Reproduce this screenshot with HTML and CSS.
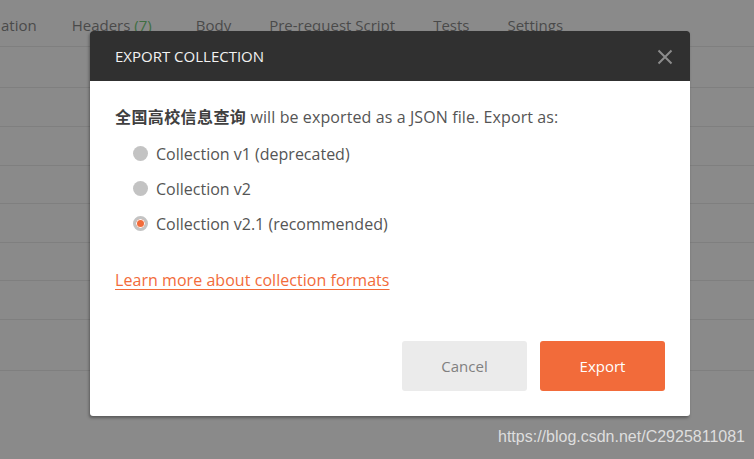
FILE: index.html
```html
<!DOCTYPE html>
<html lang="en">
<head>
<meta charset="utf-8">
<title>Export Collection</title>
<link rel="stylesheet" href="styles.css">
</head>
<body>
<div class="app">
  <nav class="tabs">
    <div class="tab tab-cut">ation</div>
    <div class="tab tab-headers">Headers <span class="count">(7)</span></div>
    <div class="tab">Body</div>
    <div class="tab">Pre-request Script</div>
    <div class="tab">Tests</div>
    <div class="tab">Settings</div>
  </nav>
  <div class="rows">
    <div class="row row-first"></div>
    <div class="row"></div>
    <div class="row"></div>
    <div class="row row-short"></div>
    <div class="row"></div>
    <div class="row row-short"></div>
    <div class="row"></div>
    <div class="row row-last"></div>
  </div>
</div>

<div class="modal">
  <header class="modal-header">
    <h1 class="modal-title">EXPORT COLLECTION</h1>
    <svg class="close" width="16" height="16" viewBox="0 0 16 16" aria-hidden="true">
      <path d="M1.5 1.5 L14.5 14.5 M14.5 1.5 L1.5 14.5" stroke="#8c8c8c" stroke-width="2" fill="none"/>
    </svg>
  </header>
  <div class="modal-body">
    <p class="desc"><strong class="name">全国高校信息查询</strong> will be exported as a JSON file. Export as:</p>
    <ul class="options">
      <li class="option"><span class="radio"></span>Collection v1 (deprecated)</li>
      <li class="option"><span class="radio"></span>Collection v2</li>
      <li class="option"><span class="radio radio-on"></span>Collection v2.1 (recommended)</li>
    </ul>
    <a class="learn" href="#">Learn more about collection formats</a>
    <div class="actions">
      <button class="btn btn-cancel">Cancel</button>
      <button class="btn btn-export">Export</button>
    </div>
  </div>
</div>

<div class="watermark">https://blog.csdn.net/C2925811081</div>
</body>
</html>
```

FILE: styles.css
```css
* { box-sizing: border-box; }

html, body {
  margin: 0;
  padding: 0;
}

body {
  width: 754px;
  height: 459px;
  overflow: hidden;
  background: #8a8a8a;
  font-family: "Open Sans", "Noto Sans CJK SC", sans-serif;
  position: relative;
}

.app {
  display: flex;
  flex-direction: column;
}

.tabs {
  display: flex;
  align-items: center;
  gap: 38px;
  height: 47px;
  padding: 3px 0 0 1px;
  border-bottom: 1px solid #7f7f7f;
  font-size: 15px;
  color: #4a4a4a;
}

.tab { white-space: nowrap; }

.tab-cut { margin-right: -3px; }

.tab-headers { margin-right: 6px; }

.count { color: #3f6e42; }

.rows {
  display: flex;
  flex-direction: column;
}

.row {
  height: 39px;
  border-bottom: 1px solid #7f7f7f;
}
.row-first { height: 41px; }
.row-short { height: 38px; }
.row-last { height: 51px; }

.modal {
  position: absolute;
  left: 90px;
  top: 31px;
  width: 600px;
  height: 385px;
  background: #ffffff;
  border-radius: 3px;
  box-shadow: -1px 2px 3px rgba(0, 0, 0, 0.35);
  display: flex;
  flex-direction: column;
}

.modal-header {
  height: 50px;
  background: #303030;
  border-radius: 3px 3px 0 0;
  display: flex;
  align-items: center;
  justify-content: space-between;
  padding: 0 17px 0 25px;
}

.modal-title {
  margin: 0;
  font-size: 15px;
  font-weight: 400;
  color: #f2f2f2;
}

.close { display: block; margin-top: 1px; }

.modal-body {
  padding: 25px 25px 24px;
  display: flex;
  flex-direction: column;
  align-items: flex-start;
  color: #555555;
  font-size: 16px;
}

.desc {
  margin: 0;
  line-height: 22px;
  letter-spacing: 0.1px;
}

.name {
  font-weight: 700;
  color: #404040;
  letter-spacing: 0.4px;
}

.options {
  list-style: none;
  margin: 8px 0 0;
  padding: 0 0 0 18px;
}

.option {
  height: 35px;
  display: flex;
  align-items: center;
  gap: 8px;
  line-height: 22px;
}

.radio {
  width: 15px;
  height: 15px;
  border-radius: 50%;
  background: #c3c3c3;
  flex: none;
}

.radio-on {
  background: #f26b3a;
  box-shadow: inset 0 0 0 1px #ffffff;
  border: 3px solid #c3c3c3;
}

.learn {
  margin-top: 28px;
  line-height: 22px;
  color: #f26b3a;
  text-decoration: underline;
  text-underline-offset: 3px;
  letter-spacing: 0.05px;
}

.actions {
  align-self: flex-end;
  display: flex;
  gap: 13px;
  margin-top: 50px;
}

.btn {
  width: 125px;
  height: 50px;
  border: 0;
  border-radius: 3px;
  font-family: "Open Sans", sans-serif;
  font-size: 15px;
  padding: 0;
}

.btn-cancel {
  background: #ebebeb;
  color: #808080;
}

.btn-export {
  background: #f26b3a;
  color: #ffffff;
}

.watermark {
  position: absolute;
  right: 9px;
  top: 428px;
  font-family: "Liberation Sans", Arial, sans-serif;
  font-size: 16px;
  color: #dedede;
}
```
